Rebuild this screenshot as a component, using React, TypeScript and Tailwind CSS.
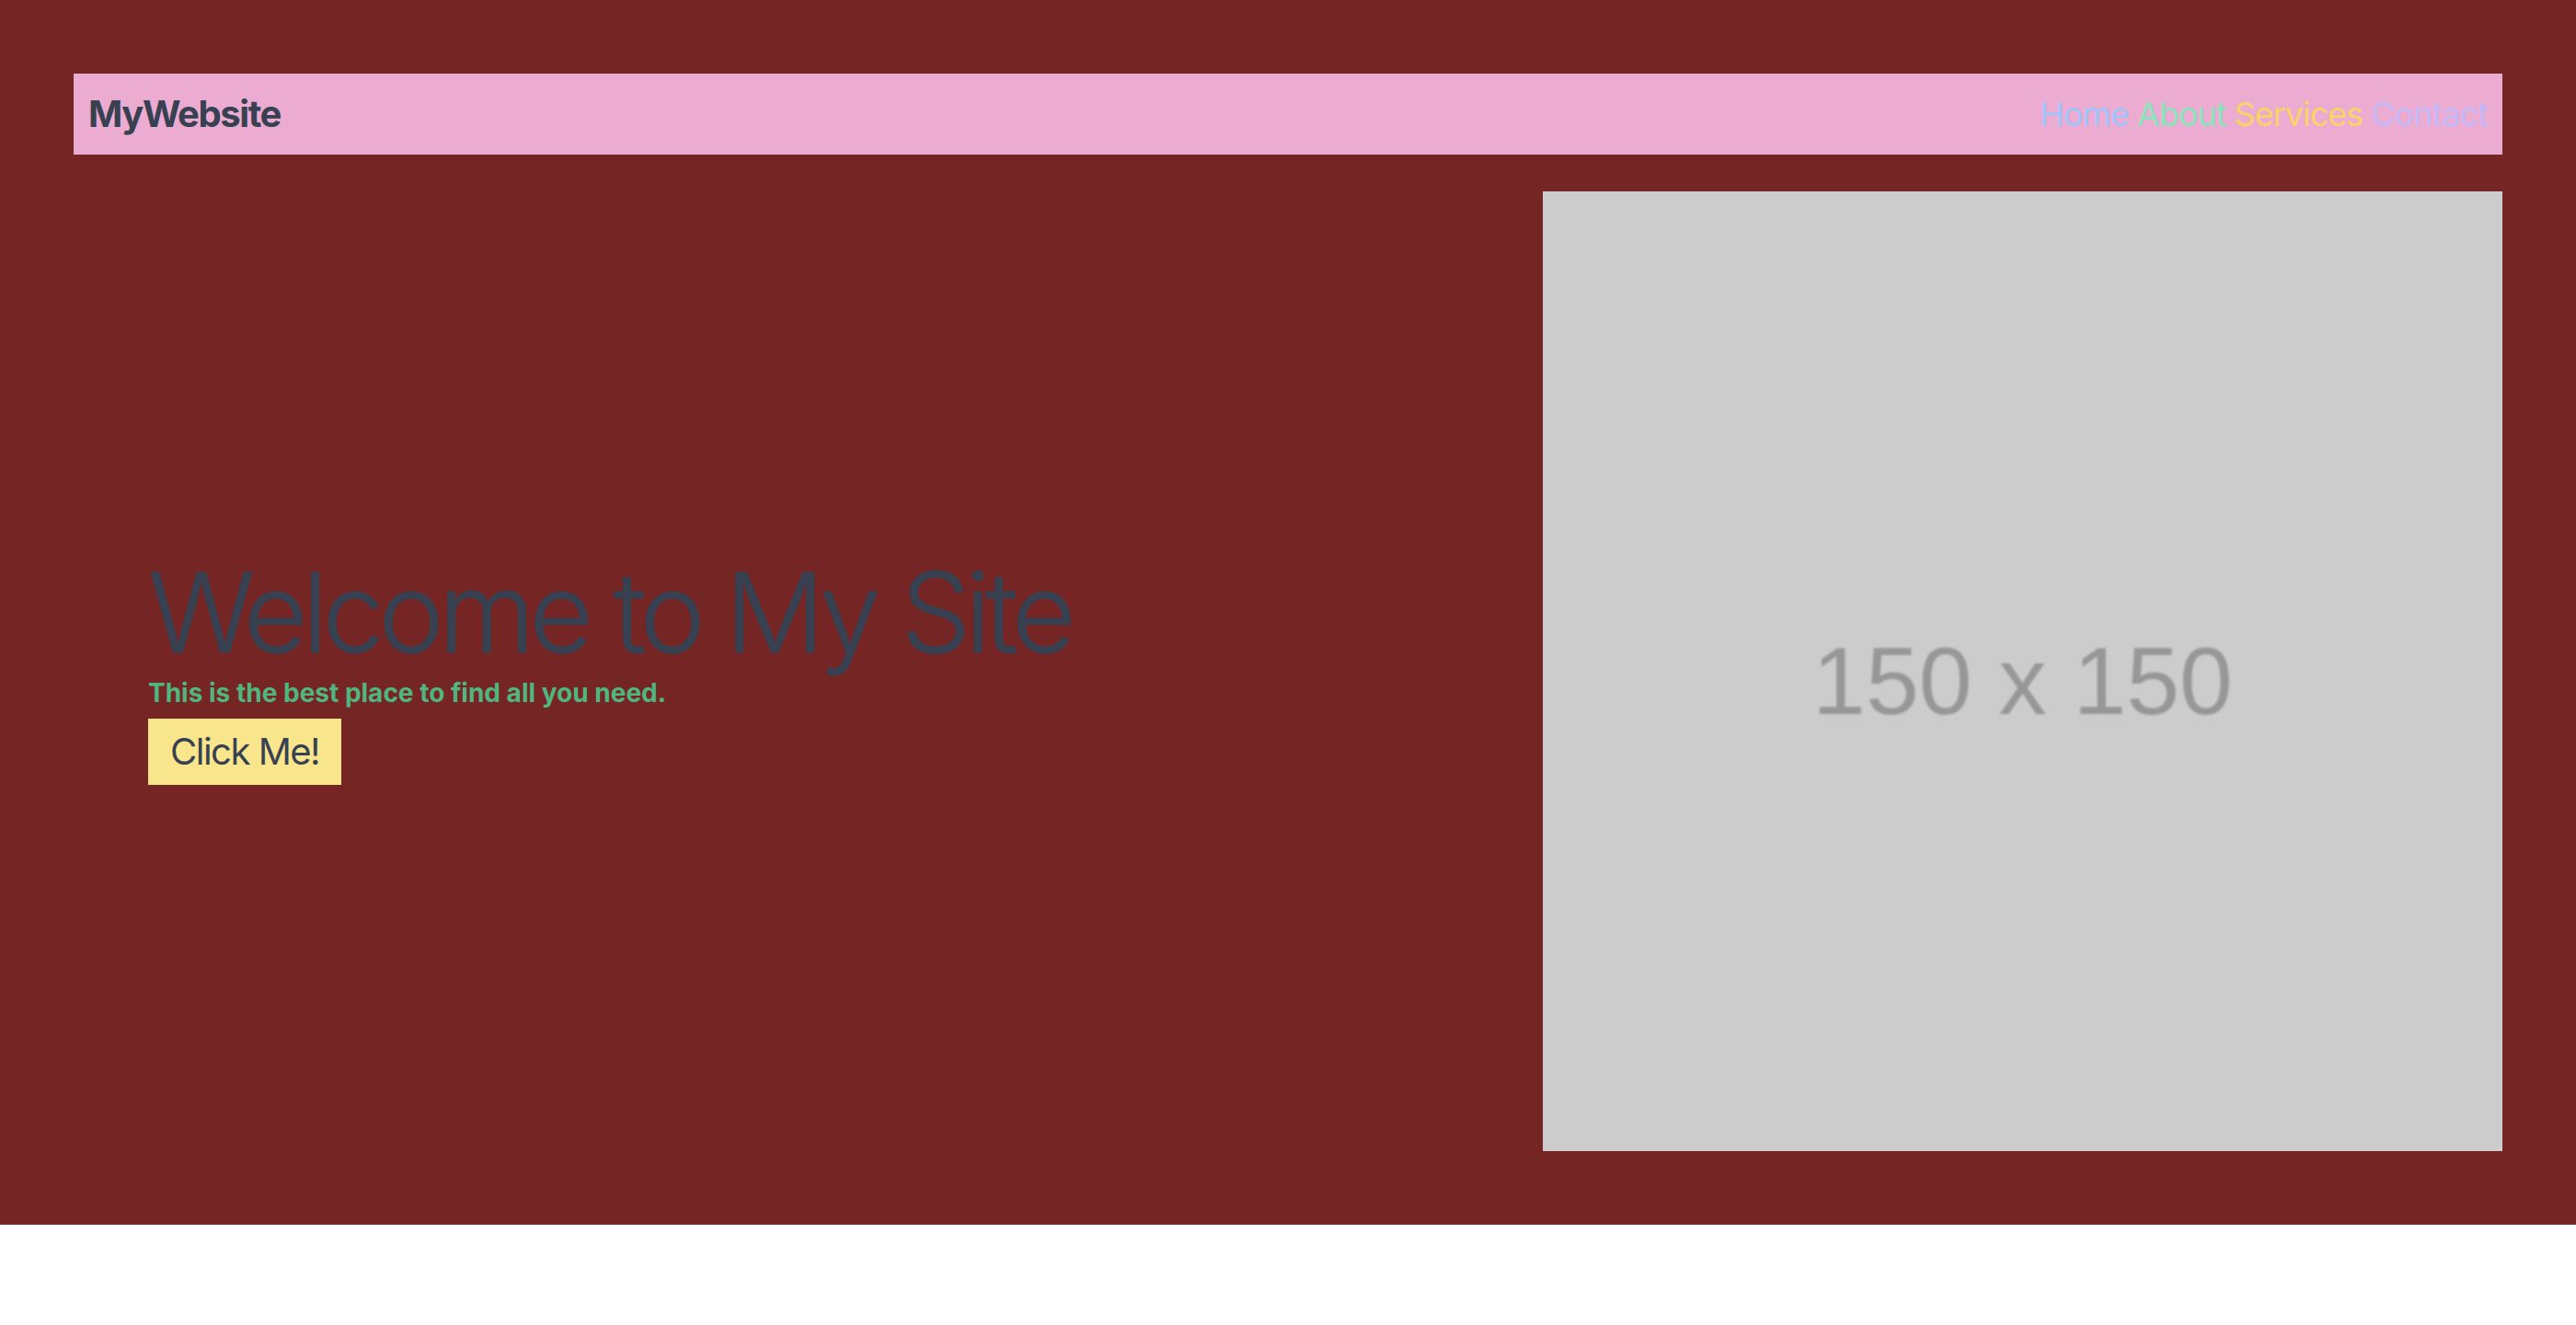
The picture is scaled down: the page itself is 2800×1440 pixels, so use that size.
export default function App() {
  const links = [
    { label: 'Home', color: 'text-[#9fc5fb]' },
    { label: 'About', color: 'text-[#89e4b9]' },
    { label: 'Services', color: 'text-[#f8d468]' },
    { label: 'Contact', color: 'text-[#c3b8f8]' },
  ];

  return (
    <div className="w-full bg-white font-['Inter',sans-serif]" style={{ minHeight: 1440 }}>
      <section className="bg-[#752523] p-[80px]">
        {/* Navbar */}
        <nav className="flex items-center justify-between bg-[#ecabd0] px-4 py-4">
          <div className="text-[40px] leading-[56px] font-bold tracking-[-1.4px] text-[#374151]">MyWebsite</div>
          <div className="flex gap-[9px] text-[36px] leading-[56px] tracking-[-1px]">
            {links.map((l) => (
              <a key={l.label} href="#" className={l.color}>
                {l.label}
              </a>
            ))}
          </div>
        </nav>

        {/* Hero */}
        <div className="mt-[40px] flex">
          <div className="flex flex-1 flex-col justify-center pl-[81px]">
            <h1 className="text-[120px] leading-[120px] font-light tracking-[-6px] text-[#374151] [-webkit-text-stroke:1px_#374151]">
              Welcome to My Site
            </h1>
            <p className="mt-[7px] text-[28px] leading-[40px] font-bold text-[#4fb67f]">
              This is the best place to find all you need.
            </p>
            <div className="mt-[8px]">
              <button className="bg-[#f9e68c] px-6 py-2 text-[40px] leading-[56px] tracking-[-1.5px] text-[#374151]">
                Click Me!
              </button>
            </div>
          </div>
          <div className="flex h-[1043px] w-[1043px] shrink-0 items-center justify-center bg-[#cccccc]">
            <span className="mt-[20px] font-['Liberation_Sans',sans-serif] text-[104px] text-[#979797] blur-[1px]">
              150 x 150
            </span>
          </div>
        </div>
      </section>
    </div>
  );
}
